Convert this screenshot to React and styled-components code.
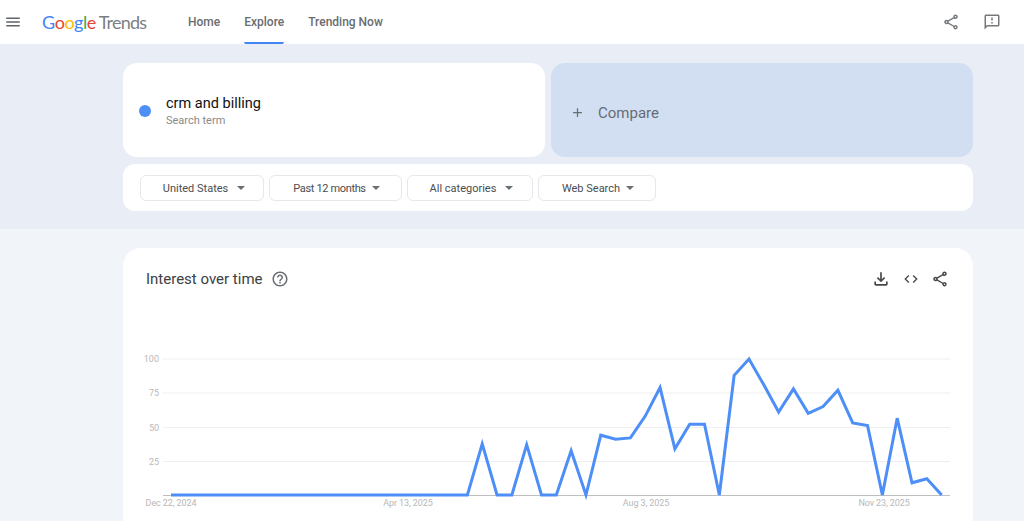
import React from 'react'
import styled, { createGlobalStyle } from 'styled-components'
import {
  MdMenu,
  MdOutlineShare,
  MdOutlineFeedback,
  MdAdd,
  MdHelpOutline,
  MdOutlineFileDownload,
  MdCode,
} from 'react-icons/md'

const GlobalStyle = createGlobalStyle`
html, body {
  margin: 0;
  height: 521px;
  overflow: hidden;
  background-color: #F1F4F9;
  font-family: "Roboto", "Liberation Sans", sans-serif;
}
`

const Nav = styled.header`
height: 44px;
background-color: #FFF;
display: flex;
align-items: center;
color: #5F6368;
`

const MenuButton = styled.div`
width: 26px;
display: flex;
justify-content: center;
font-size: 18px;
`

const Logo = styled.div`
margin-left: 16px;
width: 146px;
font-family: "Lato", sans-serif;
font-size: 18px;
letter-spacing: -0.5px;
white-space: nowrap;
display: flex;
align-items: baseline;
`

const Letter = styled.span`
color: ${props => props.color};
`

const LogoWord = styled.span`
margin-left: 3px;
color: #7B7F83;
letter-spacing: -0.8px;
`

const Tabs = styled.nav`
display: flex;
align-self: stretch;
gap: 24px;
`

const Tab = styled.a`
display: flex;
align-items: center;
height: 44px;
box-sizing: border-box;
padding-top: 2px;
font-size: 12px;
font-weight: 500;
color: #6A6D71;
border-bottom: 2px solid ${props => props.active ? '#4285F4' : 'transparent'};
border-radius: 0 0 2px 2px;
`

const NavActions = styled.div`
margin-left: auto;
margin-right: 23px;
display: flex;
align-items: center;
gap: 23px;
font-size: 18px;
color: #75787C;
`

const Hero = styled.section`
background-color: #E8EDF6;
padding: 19px 0 18px;
`

const Inner = styled.div`
width: 850px;
margin-left: 123px;
`

const SearchRow = styled.div`
display: grid;
grid-template-columns: 1fr 1fr;
gap: 6px;
`

const TermCard = styled.div`
height: 94px;
background-color: #FFF;
border-radius: 14px;
display: flex;
align-items: center;
padding-left: 16px;
`

const Dot = styled.span`
width: 12px;
height: 12px;
border-radius: 50%;
background-color: #4D8FF7;
margin-right: 15px;
margin-top: 2px;
`

const TermName = styled.div`
font-size: 14.5px;
line-height: 20px;
padding-top: 2px;
color: #111;
`

const TermType = styled.div`
font-size: 11px;
line-height: 14px;
color: #8A8A8A;
`

const CompareCard = styled.div`
height: 94px;
box-sizing: border-box;
background-color: #D2DFF2;
border-radius: 14px;
display: flex;
align-items: center;
padding: 6px 0 0 19px;
color: #666C74;
font-size: 15px;
`

const PlusIcon = styled(MdAdd)`
font-size: 15px;
margin-right: 13px;
margin-top: -2px;
`

const FilterCard = styled.div`
height: 47px;
box-sizing: border-box;
margin-top: 7px;
background-color: #FFF;
border-radius: 12px;
display: flex;
align-items: center;
padding-left: 17px;
gap: 5px;
`

const Filter = styled.div`
width: ${props => props.width}px;
height: 26px;
box-sizing: border-box;
padding: 1px 0 0 ${props => props.shift || 4}px;
border: 1px solid #E6E8EC;
border-radius: 6px;
display: flex;
align-items: center;
justify-content: center;
gap: ${props => props.gap || 9}px;
font-size: 11px;
letter-spacing: ${props => props.tight ? '-0.35px' : '0'};
color: #4A4D51;
`

const Caret = styled.span`
width: 0;
height: 0;
border-left: 4px solid transparent;
border-right: 4px solid transparent;
border-top: 4px solid #6B6E72;
`

const ChartCard = styled.section`
width: 850px;
margin: 19px 0 0 123px;
background-color: #FFF;
border-radius: 18px 18px 0 0;
padding-top: 21px;
`

const ChartHeader = styled.div`
height: 20px;
display: flex;
align-items: center;
padding: 0 23px;
color: #3C4043;
`

const ChartTitle = styled.h2`
margin: 0;
font-size: 15px;
font-weight: 400;
`

const HelpIcon = styled(MdHelpOutline)`
margin-left: 8px;
font-size: 18px;
color: #6B6E72;
`

const ChartActions = styled.div`
margin-left: auto;
margin-right: 1px;
display: flex;
align-items: center;
gap: 12px;
color: #44474A;
`

const Plot = styled.svg`
display: block;
margin-top: 51px;
width: 850px;
height: 181px;
font-family: "Roboto", "Liberation Sans", sans-serif;
`

const values = [
  0, 0, 0, 0, 0, 0, 0, 0, 0, 0, 0, 0, 0, 0, 0, 0, 0, 0, 0, 0, 0, 37.6, 0, 0, 37, 0, 0,
  32.5, 0, 44, 41, 42, 58, 79, 34, 52, 52, 0, 88, 100, 81, 61, 78, 60, 65, 77, 53, 51, 0,
  56.5, 9, 12, 0,
]

const gridLines = [
  { label: '100', y: 359 },
  { label: '75', y: 393 },
  { label: '50', y: 427.5 },
  { label: '25', y: 461.5 },
]

const dates = [
  { label: 'Dec 22, 2024', x: 171 },
  { label: 'Apr 13, 2025', x: 408 },
  { label: 'Aug 3, 2025', x: 646 },
  { label: 'Nov 23, 2025', x: 884 },
]

const linePoints = values
  .map((v, i) => `${171 + 14.82 * i},${(495 - v * 1.36).toFixed(1)}`)
  .join(' ')

function Chart() {
  return (
    <Plot viewBox="123 340 850 181">
      {gridLines.map(line => (
        <g key={line.label}>
          <line x1="163" x2="950" y1={line.y} y2={line.y} stroke="#EFEFEF" strokeWidth="1" />
          <text x="159" y={line.y + 3} textAnchor="end" fontSize="9" fill="#B8B8B8">{line.label}</text>
        </g>
      ))}
      <line x1="163" x2="950" y1="495.5" y2="495.5" stroke="#BFBFBF" strokeWidth="1" />
      {dates.map(date => (
        <text key={date.label} x={date.x} y="506" textAnchor="middle" fontSize="9" letterSpacing="-0.1" fill="#B8B8B8">{date.label}</text>
      ))}
      <polyline points={linePoints} fill="none" stroke="#4D8FF7" strokeWidth="3" strokeLinejoin="miter" />
    </Plot>
  )
}

function App() {
  return (
    <>
      <GlobalStyle />
      <Nav>
        <MenuButton><MdMenu /></MenuButton>
        <Logo>
          <Letter color="#4285F4">G</Letter>
          <Letter color="#EA4335">o</Letter>
          <Letter color="#FBBC05">o</Letter>
          <Letter color="#4285F4">g</Letter>
          <Letter color="#34A853">l</Letter>
          <Letter color="#EA4335">e</Letter>
          <LogoWord>Trends</LogoWord>
        </Logo>
        <Tabs>
          <Tab>Home</Tab>
          <Tab active>Explore</Tab>
          <Tab>Trending Now</Tab>
        </Tabs>
        <NavActions>
          <MdOutlineShare />
          <MdOutlineFeedback />
        </NavActions>
      </Nav>
      <Hero>
        <Inner>
          <SearchRow>
            <TermCard>
              <Dot />
              <div>
                <TermName>crm and billing</TermName>
                <TermType>Search term</TermType>
              </div>
            </TermCard>
            <CompareCard>
              <PlusIcon />
              Compare
            </CompareCard>
          </SearchRow>
          <FilterCard>
            <Filter width={124}>United States<Caret /></Filter>
            <Filter width={133} gap={6} shift={2} tight>Past 12 months<Caret /></Filter>
            <Filter width={126} shift={3}>All categories<Caret /></Filter>
            <Filter width={118} gap={6} shift={2}>Web Search<Caret /></Filter>
          </FilterCard>
        </Inner>
      </Hero>
      <ChartCard>
        <ChartHeader>
          <ChartTitle>Interest over time</ChartTitle>
          <HelpIcon />
          <ChartActions>
            <MdOutlineFileDownload size={20} />
            <MdCode size={16} />
            <MdOutlineShare size={18} />
          </ChartActions>
        </ChartHeader>
        <Chart />
      </ChartCard>
    </>
  )
}

export default App
